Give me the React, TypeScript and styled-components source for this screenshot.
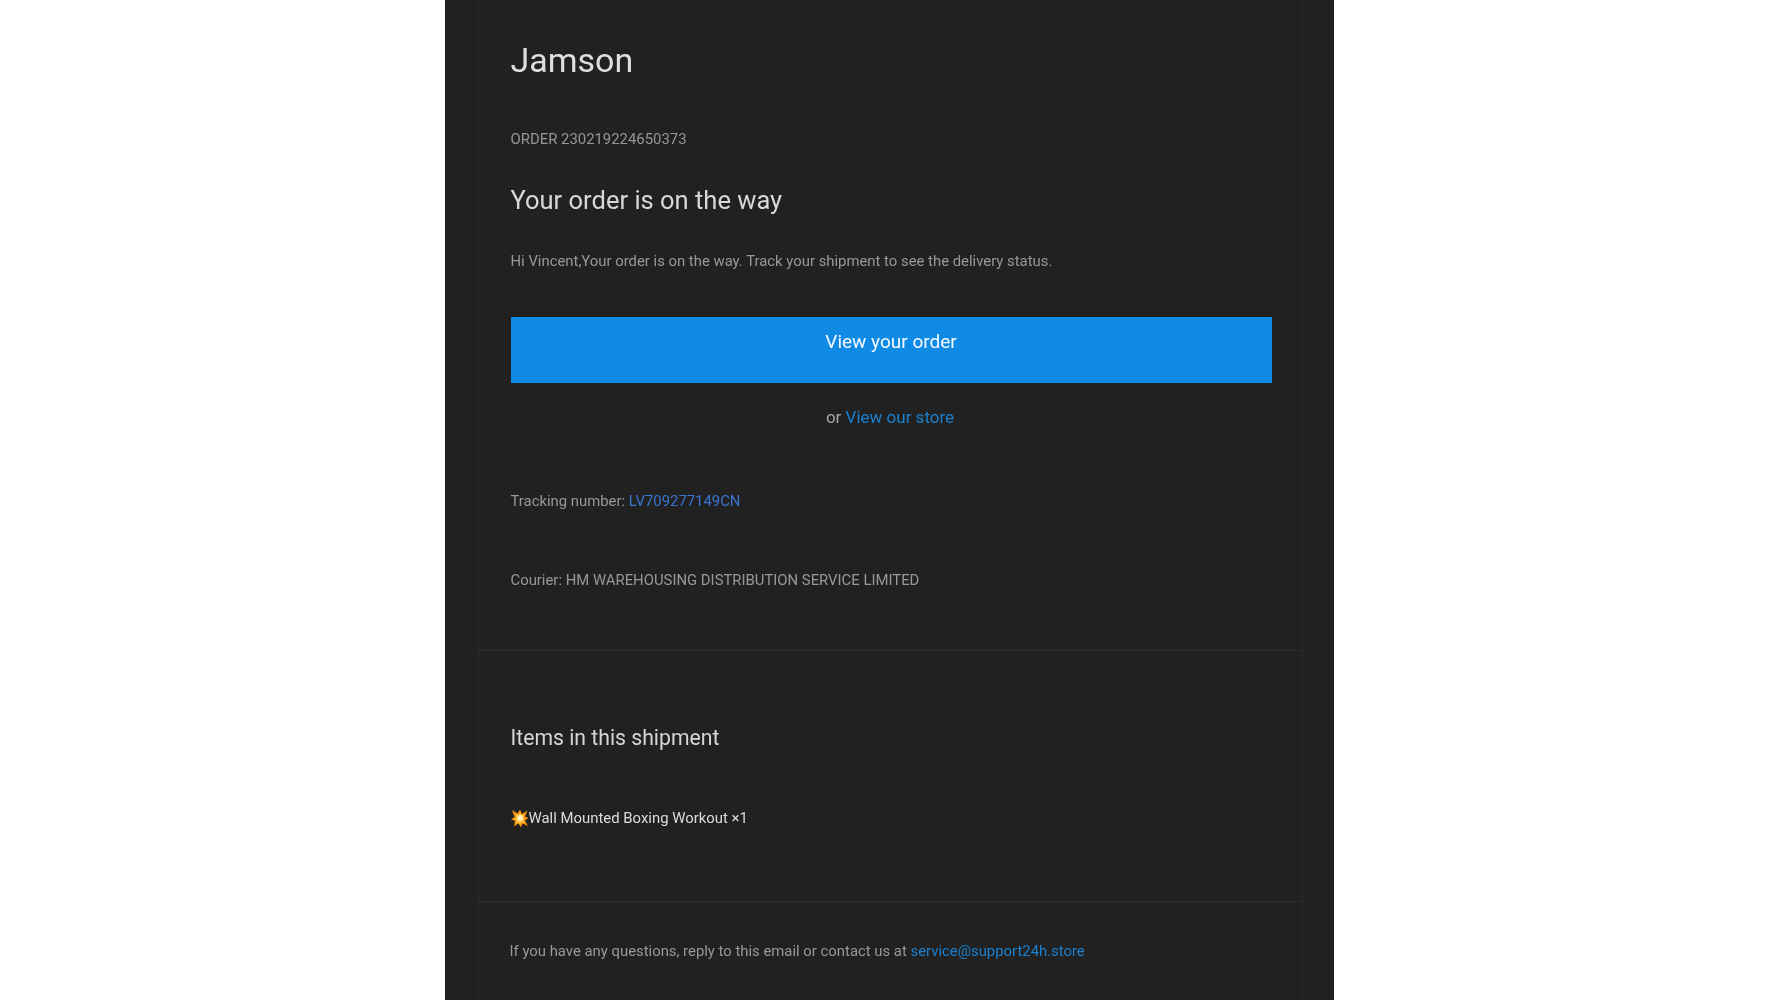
import styled, { createGlobalStyle } from 'styled-components'

const Global = createGlobalStyle`
	html, body {
		margin: 0;
		height: 100%;
		overflow: hidden;
		background: #fff;
		font-family: Roboto, "Liberation Sans", sans-serif;
	}
`

const Page = styled.div`
	display: flex;
	justify-content: center;
	height: 1000px;
	overflow: hidden;
`

const Panel = styled.main`
	width: 889px;
	height: 1000px;
	background: #212121;
	padding-left: 33px;
	padding-right: 31px;
	box-sizing: border-box;
	overflow: hidden;
`

const Card = styled.div`
	width: 825px;
	min-height: 1000px;
	box-sizing: border-box;
	border-left: 1px solid #2b2b2b;
	border-right: 1px solid #2b2b2b;
	filter: blur(0.45px);
`

const Section = styled.section<{ $top: number; $bottom: number }>`
	padding: ${({ $top, $bottom }) => `${$top}px 30px ${$bottom}px 32px`};
	border-bottom: 1px solid #2d2d2d;
`

const Footer = styled.footer`
	padding: 38px 30px 0 31px;
`

const Brand = styled.h1`
	margin: 0 0 48px;
	font-size: 34px;
	line-height: 40px;
	font-weight: 400;
	color: #dedede;
`

const OrderNo = styled.div`
	font-size: 14.9px;
	line-height: 22px;
	color: #969696;
`

const Title = styled.h2`
	margin: 34px 0 34px;
	font-size: 25.5px;
	line-height: 32px;
	font-weight: 400;
	color: #d8d8d8;
`

const Text = styled.p<{ $mt?: number }>`
	margin: ${({ $mt }) => $mt ?? 0}px 0 0;
	font-size: 14.87px;
	line-height: 22px;
	color: #989898;
`

const Button = styled.a`
	display: block;
	height: 66px;
	margin-top: 45px;
	padding-top: 13px;
	box-sizing: border-box;
	background: #0f8be6;
	color: #f4f9fe;
	text-align: center;
	font-size: 19px;
	line-height: 24px;
	font-weight: 400;
`

const OrLine = styled.div`
	margin-top: 22px;
	margin-bottom: 61px;
	padding-right: 2px;
	text-align: center;
	font-size: 17px;
	line-height: 24px;
	color: #a6a6a6;
`

const Link = styled.a<{ $color?: string }>`
	color: ${({ $color }) => $color ?? '#1b80cf'};
	text-decoration: none;
`

const Subtitle = styled.h3`
	margin: 0 0 55px;
	font-size: 21.2px;
	line-height: 28px;
	font-weight: 400;
	color: #d6d6d6;
`

const Product = styled.div`
	display: flex;
	align-items: center;
	font-size: 14.9px;
	line-height: 22px;
	font-weight: 400;
	color: #dcdcdc;
`

const Blast = () => (
	<svg width="18" height="18" viewBox="0 0 36 36" style={{ flexShrink: 0 }}>
		<path
			fill="#f4900c"
			d="M2 2l11 7 5-8 4 9 11-7-5 12 7 3-7 5 6 11-11-5-3 8-5-8-9 6 2-11-8-3 7-5z"
		/>
		<path
			fill="#ffcc4d"
			d="M9 8l6 5 3-6 3 6 7-4-4 8 5 2-5 3 3 7-7-3-2 5-3-5-6 3 2-7-5-2 5-3z"
		/>
		<circle cx="18" cy="18" r="5.5" fill="#fff3c4" />
	</svg>
)

const App = () => {
	return (
		<>
			<Global />
			<Page>
				<Panel>
					<Card>
						<Section $top={40} $bottom={59}>
							<Brand>Jamson</Brand>
							<OrderNo>ORDER 230219224650373</OrderNo>
							<Title>Your order is on the way</Title>
							<Text>Hi Vincent,Your order is on the way. Track your shipment to see the delivery status.</Text>
							<Button>View your order</Button>
							<OrLine>
								or <Link>View our store</Link>
							</OrLine>
							<Text>
								Tracking number: <Link $color="#3a75d2">LV709277149CN</Link>
							</Text>
							<Text $mt={57}>Courier: HM WAREHOUSING DISTRIBUTION SERVICE LIMITED</Text>
						</Section>
						<Section $top={73} $bottom={72}>
							<Subtitle>Items in this shipment</Subtitle>
							<Product>
								<Blast />
								Wall Mounted Boxing Workout ×1
							</Product>
						</Section>
						<Footer>
							<Text>
								If you have any questions, reply to this email or contact us at{' '}
								<Link>service@support24h.store</Link>
							</Text>
						</Footer>
					</Card>
				</Panel>
			</Page>
		</>
	)
}

export default App
